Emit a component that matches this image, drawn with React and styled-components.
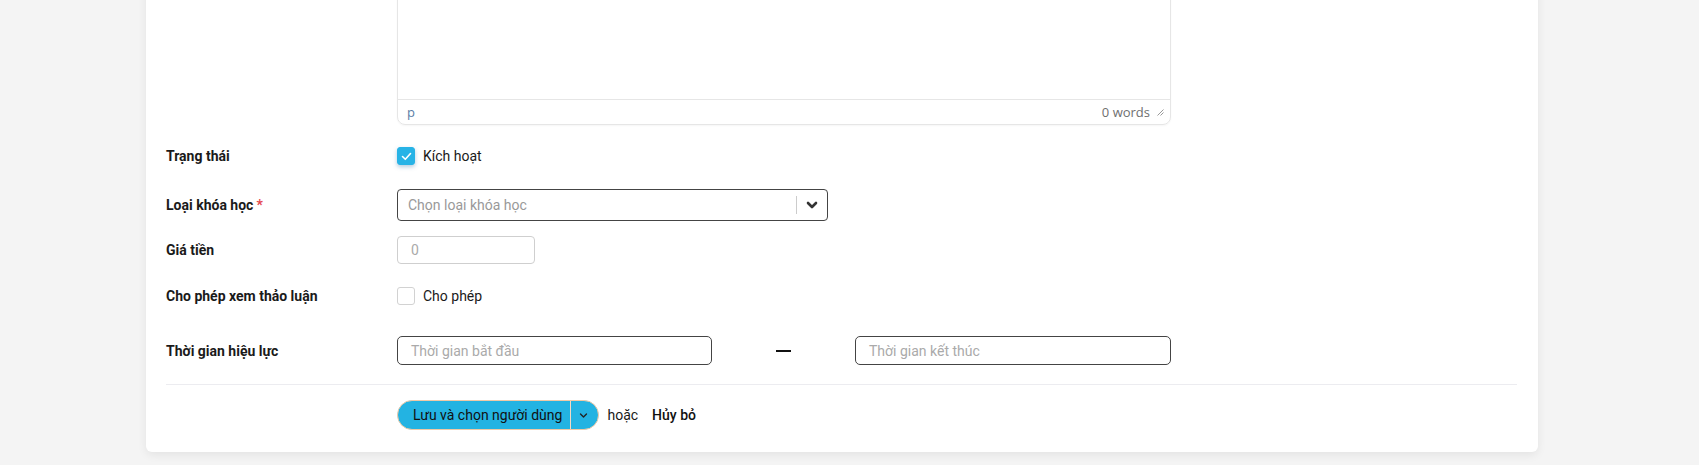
import React from "react";
import styled, { createGlobalStyle } from "styled-components";

const GlobalStyle = createGlobalStyle`
  html, body {
    margin: 0;
    padding: 0;
    background: #f4f4f4;
    font-family: Roboto, "Noto Sans", Arial, sans-serif;
    color: #1a1a1a;
  }
  * { box-sizing: border-box; }
`;

const Page = styled.div`
  height: 465px;
  overflow: hidden;
`;

const Card = styled.div`
  margin: -20px 0 0 146px;
  width: 1392px;
  background: #fff;
  border-radius: 0 0 6px 6px;
  box-shadow: 0 3px 10px rgba(0, 0, 0, 0.07);
  padding: 0 21px 22px 20px;
`;

const Row = styled.div`
  display: grid;
  grid-template-columns: 231px 1fr;
  align-items: center;
  min-height: ${(p) => p.$h || 32}px;
  margin-top: ${(p) => p.$top || 0}px;
`;

const Label = styled.div`
  font-size: 14px;
  font-weight: 700;
  color: #1a1a1a;
`;

const Required = styled.span`
  color: #e5484d;
  margin-left: 3px;
`;

const Editor = styled.div`
  width: 774px;
  border: 1px solid #e6e6e6;
  border-radius: 0 0 8px 8px;
  box-shadow: 0 1px 2px rgba(0, 0, 0, 0.04);
`;

const EditArea = styled.div`
  height: 119px;
  border-bottom: 1px solid #e6e6e6;
`;

const StatusBar = styled.div`
  height: 24px;
  display: flex;
  align-items: center;
  justify-content: space-between;
  padding: 0 6px 0 9px;
  font-family: "Open Sans", "Noto Sans", sans-serif;
  font-size: 13px;
`;

const PathText = styled.span`
  color: #5a7ea6;
`;

const Words = styled.span`
  display: flex;
  align-items: center;
  gap: 6px;
  color: #6f6f6f;
`;

const CheckWrap = styled.label`
  display: flex;
  align-items: center;
  gap: 8px;
  font-size: 14px;
  color: #1a1a1a;
`;

const Box = styled.span`
  width: 18px;
  height: 18px;
  border-radius: 3px;
  display: flex;
  align-items: center;
  justify-content: center;
  background: ${(p) => (p.$checked ? "#27b3e6" : "#fff")};
  border: 1px solid ${(p) => (p.$checked ? "#27b3e6" : "#d2d2d2")};
  box-shadow: ${(p) => (p.$checked ? "0 2px 4px rgba(39,110,160,0.35)" : "none")};
`;

const Select = styled.div`
  width: 431px;
  height: 32px;
  border: 1px solid #444;
  border-radius: 4px;
  display: flex;
  align-items: center;
  padding-left: 10px;
`;

const Placeholder = styled.span`
  flex: 1;
  font-size: 14px;
  color: #999;
`;

const SelSep = styled.span`
  width: 1px;
  height: 18px;
  background: #ccc;
`;

const Chevron = styled.span`
  width: 30px;
  display: flex;
  align-items: center;
  justify-content: center;
`;

const Input = styled.div`
  width: ${(p) => p.$w}px;
  height: ${(p) => p.$hh || 28}px;
  border: 1px solid ${(p) => p.$border || "#cfcfcf"};
  border-radius: ${(p) => p.$radius || 4}px;
  display: flex;
  align-items: center;
  padding-left: ${(p) => p.$pad || 13}px;
  font-size: 14px;
  color: #aaa;
`;

const DateRange = styled.div`
  width: 774px;
  display: grid;
  grid-template-columns: 315px 1fr 316px;
  align-items: center;
`;

const Dash = styled.span`
  justify-self: center;
  width: 15px;
  height: 2px;
  background: #111;
`;

const Divider = styled.div`
  height: 1px;
  background: #ececf0;
  margin-top: 19px;
`;

const Actions = styled.div`
  display: flex;
  align-items: center;
  gap: 8px;
  margin-top: 15px;
  padding-left: 231px;
`;

const SplitButton = styled.div`
  display: flex;
  height: 30px;
  border-radius: 15px;
  background: #23b3e2;
  border: 1px solid #f0c9a6;
  overflow: hidden;
`;

const MainBtn = styled.button`
  border: none;
  background: transparent;
  font-family: inherit;
  font-size: 14px;
  color: #111;
  padding: 0 8px 0 15px;
  border-right: 1px solid #f2d9c4;
`;

const DropBtn = styled.button`
  border: none;
  background: transparent;
  width: 27px;
  display: flex;
  align-items: center;
  justify-content: center;
  padding: 0 2px 0 0;
`;

const Or = styled.span`
  font-size: 14px;
  color: #1a1a1a;
`;

const Cancel = styled.span`
  font-size: 14px;
  font-weight: 500;
  color: #111;
  margin-left: 6px;
`;

const ChevronIcon = ({ size = 12, sw = 2.6, color = "#333" }) => (
  <svg width={size} height={size} viewBox="0 0 12 12" fill="none">
    <path d="M2 4l4 4 4-4" stroke={color} strokeWidth={sw} strokeLinecap="round" strokeLinejoin="round" />
  </svg>
);

const Checkbox = ({ checked, children }) => (
  <CheckWrap>
    <Box $checked={checked}>
      {checked && (
        <svg width="11" height="9" viewBox="0 0 11 9" fill="none">
          <path d="M1.5 4.5l2.8 2.8L9.5 1.5" stroke="#fff" strokeWidth="1.6" strokeLinecap="round" strokeLinejoin="round" />
        </svg>
      )}
    </Box>
    {children}
  </CheckWrap>
);

export default function App() {
  return (
    <Page>
      <GlobalStyle />
      <Card>
        <Row>
          <div />
          <Editor>
            <EditArea />
            <StatusBar>
              <PathText>p</PathText>
              <Words>
                0 words
                <svg width="8" height="8" viewBox="0 0 8 8">
                  <path d="M7.5 1.5L1.5 7.5M7.5 4.5L4.5 7.5" stroke="#999" strokeWidth="1" />
                </svg>
              </Words>
            </StatusBar>
          </Editor>
        </Row>

        <Row $top={15}>
          <Label>Trạng thái</Label>
          <Checkbox checked>Kích hoạt</Checkbox>
        </Row>

        <Row $top={17}>
          <Label>
            Loại khóa học<Required>*</Required>
          </Label>
          <Select>
            <Placeholder>Chọn loại khóa học</Placeholder>
            <SelSep />
            <Chevron>
              <ChevronIcon />
            </Chevron>
          </Select>
        </Row>

        <Row $top={15} $h={28}>
          <Label>Giá tiền</Label>
          <Input $w={138}>0</Input>
        </Row>

        <Row $top={16}>
          <Label>Cho phép xem thảo luận</Label>
          <Checkbox>Cho phép</Checkbox>
        </Row>

        <Row $top={24} $h={29}>
          <Label>Thời gian hiệu lực</Label>
          <DateRange>
            <Input $w={315} $hh={29} $border="#444" $radius={5}>
              Thời gian bắt đầu
            </Input>
            <Dash />
            <Input $w={316} $hh={29} $border="#444" $radius={5}>
              Thời gian kết thúc
            </Input>
          </DateRange>
        </Row>

        <Divider />

        <Actions>
          <SplitButton>
            <MainBtn>Lưu và chọn người dùng</MainBtn>
            <DropBtn>
              <ChevronIcon size={9} sw={1.8} color="#222" />
            </DropBtn>
          </SplitButton>
          <Or>hoặc</Or>
          <Cancel>Hủy bỏ</Cancel>
        </Actions>
      </Card>
    </Page>
  );
}
